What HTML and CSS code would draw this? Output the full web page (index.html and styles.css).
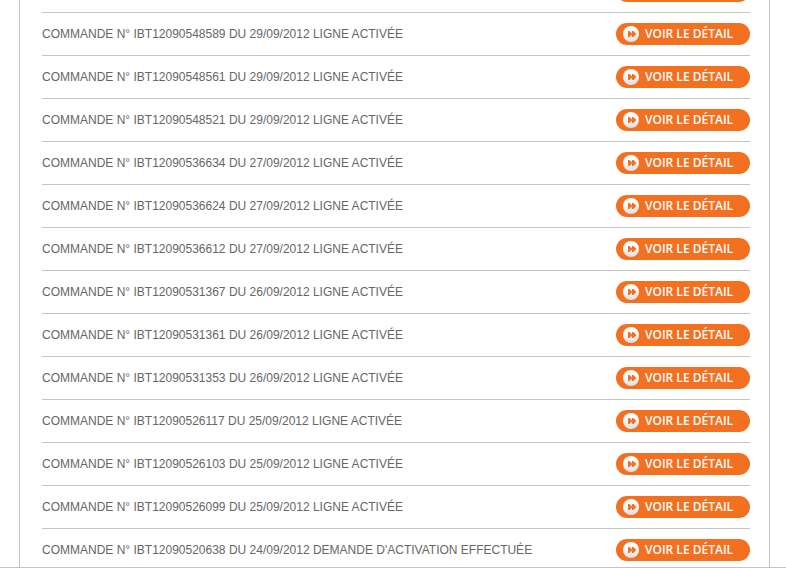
FILE: index.html
```html
<!DOCTYPE html>
<html lang="fr">
<head>
    <meta charset="UTF-8">
    <meta name="viewport" content="width=device-width, initial-scale=1.0">
    <title>Commandes</title>
    <link rel="stylesheet" href="styles.css">
</head>
<body>
    <svg class="sprite" aria-hidden="true">
        <defs>
            <linearGradient id="disc" x1="0" y1="0" x2="0" y2="1">
                <stop offset="0.3" stop-color="#ffffff" />
                <stop offset="1" stop-color="#dedede" />
            </linearGradient>
            <symbol id="forward" viewBox="0 0 16 16">
                <circle cx="8" cy="8" r="8" fill="url(#disc)" />
                <path d="M5 5h1.4L9 7.4V5h1.4L13.4 8l-3 3H9V8.6L6.4 11H5z" fill="#f37021" />
            </symbol>
        </defs>
    </svg>

    <main class="page">
        <div class="panel">
            <ul id="orders" class="orders">
                <li class="order">
                    <span></span>
                    <button type="button" class="detail" aria-label="Voir le détail"></button>
                </li>
            </ul>
        </div>
    </main>

    <script src="orders.js"></script>
</body>
</html>
```
FILE: styles.css
```css
body {
    margin: 0;
    background-color: #fff;
    font-family: "Liberation Sans", Arial, sans-serif;
    font-size: 12px;
    line-height: 16px;
    color: #666;
}

.sprite {
    position: absolute;
    width: 0;
    height: 0;
}

.page {
    box-sizing: border-box;
    height: 100vh;
    overflow: hidden;
    border-bottom: 1px solid #c4c4c4;
}

.panel {
    margin: 0 16px 0 19px;
    padding: 0 19px 0 22px;
    border: solid #c4c4c4;
    border-width: 0 1px;
}

/* the list is scrolled part of a row past the top edge */
.orders {
    margin: -30px 0 0;
    padding: 0;
    list-style: none;
}

.order {
    display: flex;
    align-items: center;
    justify-content: space-between;
    padding: 10px 0;
    border-bottom: 1px solid #c4c4c4;
}

.detail {
    display: flex;
    align-items: center;
    gap: 6px;
    width: 134px;
    height: 22px;
    padding: 0 7px;
    border: 0;
    border-radius: 11px;
    background-color: #f37021;
    color: #fff;
    font-family: "Open Sans", "Liberation Sans", sans-serif;
    font-size: 12px;
    font-weight: 600;
    line-height: 16px;
    white-space: nowrap;
    cursor: pointer;
}

.detail-icon {
    flex: none;
    width: 16px;
    height: 16px;
}
```
FILE: orders.js
```js
const orders = [
    ["IBT12090548589", "29/09/2012", "LIGNE ACTIVÉE"],
    ["IBT12090548561", "29/09/2012", "LIGNE ACTIVÉE"],
    ["IBT12090548521", "29/09/2012", "LIGNE ACTIVÉE"],
    ["IBT12090536634", "27/09/2012", "LIGNE ACTIVÉE"],
    ["IBT12090536624", "27/09/2012", "LIGNE ACTIVÉE"],
    ["IBT12090536612", "27/09/2012", "LIGNE ACTIVÉE"],
    ["IBT12090531367", "26/09/2012", "LIGNE ACTIVÉE"],
    ["IBT12090531361", "26/09/2012", "LIGNE ACTIVÉE"],
    ["IBT12090531353", "26/09/2012", "LIGNE ACTIVÉE"],
    ["IBT12090526117", "25/09/2012", "LIGNE ACTIVÉE"],
    ["IBT12090526103", "25/09/2012", "LIGNE ACTIVÉE"],
    ["IBT12090526099", "25/09/2012", "LIGNE ACTIVÉE"],
    ["IBT12090520638", "24/09/2012", "DEMANDE D'ACTIVATION EFFECTUÉE"],
];

const list = document.getElementById("orders");

orders.forEach(([number, date, status]) => {
    list.insertAdjacentHTML("beforeend", `
        <li class="order">
            <span>COMMANDE N° ${number} DU ${date} ${status}</span>
            <button type="button" class="detail">
                <svg class="detail-icon" aria-hidden="true"><use href="#forward" /></svg>
                VOIR LE DÉTAIL
            </button>
        </li>`);
});
```
